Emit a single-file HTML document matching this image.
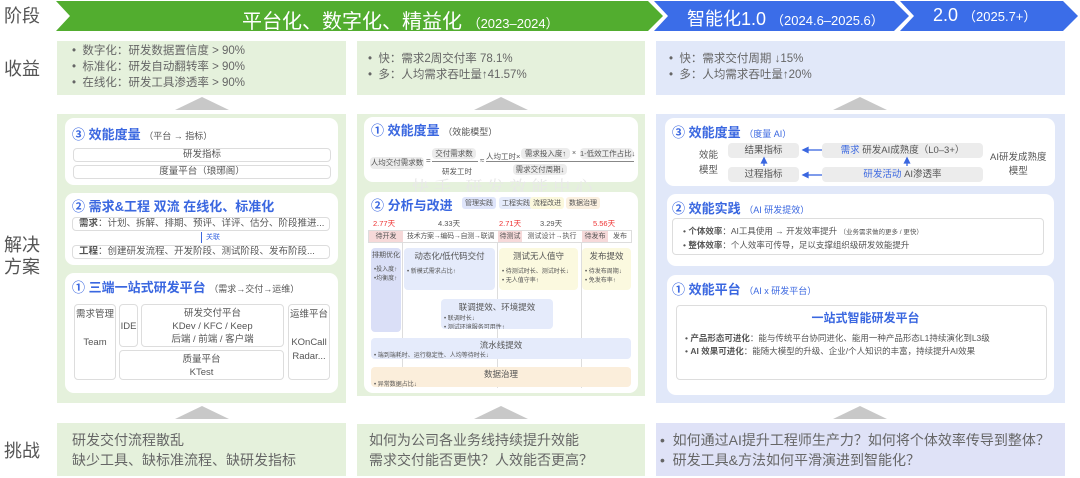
<!DOCTYPE html><html><head><meta charset="utf-8"><style>
*{margin:0;padding:0;box-sizing:border-box}
body{width:1080px;height:478px;background:#fff;position:relative;overflow:hidden;font-family:"Liberation Sans","Noto Sans CJK SC",sans-serif;color:#555}
.a{position:absolute}
.lbl{position:absolute;left:4px;font-size:18px;color:#555;line-height:22px}
.g{background:#e5f1dc}.b{background:#e1e8f9}.bc{background:#dfe2f7}
.card{position:absolute;background:#fff;border-radius:9px}
.t{color:#3a67e0;font-size:13px;font-weight:bold;white-space:nowrap}
.t small{font-size:9px;font-weight:normal;color:#555}
.t2 small{color:#3a67e0}
.row{position:absolute;border:1px solid #ddd;border-radius:4px;font-size:9.5px;text-align:center;color:#555;background:#fff;white-space:nowrap;overflow:hidden}
.ul{font-size:11.5px;line-height:16px;color:#666}
.tri{position:absolute;width:0;height:0;border-left:27px solid transparent;border-right:27px solid transparent;border-bottom:13px solid #c8c8c8}
.pill{position:absolute;background:#ececec;border-radius:4px;font-size:9px;text-align:center;color:#555;white-space:nowrap}
.ph{position:absolute;border-radius:4px;font-size:8px;color:#555;white-space:nowrap;overflow:hidden}
.ph b{display:block;text-align:center;font-weight:normal;font-size:8.5px;margin:2px 0}
.sm{font-size:6px;padding-left:3px;line-height:9px}
</style></head><body>
<svg class="a" style="left:0;top:0" width="1080" height="34">
<polygon points="56,1 648,1 663,16 648,31 56,31 70,16" fill="#52ad2f"/>
<polygon points="654,1 894,1 909,16 894,31 654,31 668,16" fill="#3b6de8"/>
<polygon points="900,1 1063,1 1078,16 1063,31 900,31 914,16" fill="#3b6de8"/>
</svg>
<div class="lbl" style="top:5px">阶段</div>
<div class="a" style="left:242px;top:5px;color:#fff;font-size:20px;white-space:nowrap">平台化、数字化、精益化 <span style="font-size:13px">（2023–2024）</span></div>
<div class="a" style="left:687px;top:5px;color:#fff;font-size:18px;white-space:nowrap">智能化1.0 <span style="font-size:13px">（2024.6–2025.6）</span></div>
<div class="a" style="left:933px;top:5px;color:#fff;font-size:18px;white-space:nowrap">2.0 <span style="font-size:13px">（2025.7+）</span></div>

<div class="lbl" style="top:58px">收益</div>
<div class="lbl" style="top:234px">解决<br>方案</div>
<div class="lbl" style="top:440px">挑战</div>

<div class="a g" style="left:57px;top:41px;width:289px;height:54px"></div>
<div class="a g" style="left:357px;top:41px;width:288px;height:54px"></div>
<div class="a b" style="left:656px;top:41px;width:409px;height:54px"></div>
<div class="a ul" style="left:72px;top:43px">•&nbsp; 数字化：研发数据置信度 &gt; 90%<br>•&nbsp; 标准化：研发自动翻转率 &gt; 90%<br>•&nbsp; 在线化：研发工具渗透率 &gt; 90%</div>
<div class="a ul" style="left:368px;top:51px">•&nbsp; 快：需求2周交付率 78.1%<br>•&nbsp; 多：人均需求吞吐量↑41.57%</div>
<div class="a ul" style="left:669px;top:51px">•&nbsp; 快：需求交付周期 ↓15%<br>•&nbsp; 多：人均需求吞吐量↑20%</div>
<div class="tri" style="left:175px;top:97px"></div><div class="tri" style="left:474px;top:97px"></div><div class="tri" style="left:833px;top:97px"></div>

<div class="a g" style="left:57px;top:114px;width:289px;height:289px"></div>
<div class="a g" style="left:357px;top:114px;width:288px;height:282px"></div>
<div class="a b" style="left:656px;top:114px;width:409px;height:289px"></div>

<div class="card" style="left:65px;top:118px;width:273px;height:67px"></div>
<div class="a t" style="left:72px;top:124px">③ 效能度量 <small>（平台 → 指标）</small></div>
<div class="row" style="left:73px;top:148px;width:258px;height:14px;line-height:12px">研发指标</div>
<div class="row" style="left:73px;top:165px;width:258px;height:14px;line-height:12px">度量平台（琅琊阁）</div>

<div class="card" style="left:65px;top:193px;width:273px;height:72px"></div>
<div class="a t" style="left:72px;top:196px">② 需求&amp;工程 双流 在线化、标准化</div>
<div class="row" style="left:72px;top:217px;width:258px;height:14px;line-height:12px;text-align:left;padding-left:6px"><b>需求</b>：计划、拆解、排期、预评、详评、估分、阶段推进...</div>
<div class="a" style="left:201px;top:232px;width:1px;height:11px;background:#3a67e0"></div>
<div class="a" style="left:206px;top:232px;font-size:7px;color:#3a67e0">关联</div>
<div class="row" style="left:72px;top:245px;width:258px;height:14px;line-height:12px;text-align:left;padding-left:6px"><b>工程</b>：创建研发流程、开发阶段、测试阶段、发布阶段...</div>

<div class="card" style="left:65px;top:273px;width:273px;height:120px"></div>
<div class="a t" style="left:72px;top:277px">① 三端一站式研发平台 <small>（需求→交付→运维）</small></div>
<div class="row" style="left:74px;top:304px;width:42px;height:76px;line-height:14px;padding-top:3px">需求管理<br><br>Team</div>
<div class="row" style="left:119px;top:304px;width:19px;height:43px;line-height:43px">IDE</div>
<div class="row" style="left:141px;top:304px;width:143px;height:43px;line-height:13px;padding-top:2px">研发交付平台<br>KDev / KFC / Keep<br>后端 / 前端 / 客户端</div>
<div class="row" style="left:119px;top:350px;width:165px;height:30px;line-height:13px;padding-top:2px">质量平台<br>KTest</div>
<div class="row" style="left:288px;top:304px;width:42px;height:76px;line-height:14px;padding-top:3px">运维平台<br><br>KOnCall<br>Radar...</div>

<div class="card" style="left:364px;top:117px;width:274px;height:65px"></div>
<div class="a t" style="left:371px;top:120px">① 效能度量 <small>（效能模型）</small></div>
<div class="pill" style="left:370px;top:157px;width:54px;height:12px;line-height:12px;font-size:7.5px">人均交付需求数</div>
<div class="a" style="left:426px;top:156px;font-size:8px">=</div>
<div class="pill" style="left:432px;top:148px;width:44px;height:11px;line-height:11px;font-size:7.5px">交付需求数</div>
<div class="a" style="left:432px;top:161px;width:46px;height:1px;background:#888"></div>
<div class="a" style="left:442px;top:166px;font-size:7.5px">研发工时</div>
<div class="a" style="left:480px;top:156px;font-size:8px">≈</div>
<div class="a" style="left:486px;top:151px;font-size:7.5px">人均工时×</div>
<div class="pill" style="left:521px;top:148px;width:49px;height:11px;line-height:11px;font-size:7.5px">需求投入度↑</div>
<div class="a" style="left:572px;top:150px;font-size:7px">×</div>
<div class="pill" style="left:580px;top:148px;width:53px;height:11px;line-height:11px;font-size:7.5px">1-低效工作占比↓</div>
<div class="a" style="left:486px;top:161px;width:148px;height:1px;background:#888"></div>
<div class="pill" style="left:513px;top:164px;width:54px;height:11px;line-height:11px;font-size:7.5px">需求交付周期↓</div>
<div class="a" style="left:412px;top:176px;font-family:'Noto Serif CJK SC',serif;font-size:17px;line-height:20px;color:#e8e8e8;letter-spacing:5px;white-space:nowrap">快手 研发效能中心</div>

<div class="card" style="left:364px;top:192px;width:274px;height:201px"></div>
<div class="a t" style="left:371px;top:195px">② 分析与改进</div>
<div class="a" style="left:462px;top:197px;font-size:7px;background:#dfe5fb;border-radius:3px;padding:1px 3px">管理实践</div>
<div class="a" style="left:499px;top:197px;font-size:7px;background:#e5ebfb;border-radius:3px;padding:1px 3px">工程实践</div>
<div class="a" style="left:530px;top:197px;font-size:7px;background:#fbf8dc;border-radius:3px;padding:1px 3px">流程改进</div>
<div class="a" style="left:566px;top:197px;font-size:7px;background:#fbf0e0;border-radius:3px;padding:1px 3px">数据治理</div>
<div class="a" style="left:373px;top:218px;font-size:7.5px;color:#e33">2.77天</div>
<div class="a" style="left:438px;top:218px;font-size:7.5px">4.33天</div>
<div class="a" style="left:499px;top:218px;font-size:7.5px;color:#e33">2.71天</div>
<div class="a" style="left:540px;top:218px;font-size:7.5px">3.29天</div>
<div class="a" style="left:593px;top:218px;font-size:7.5px;color:#e33">5.56天</div>
<div class="a" style="left:368px;top:230px;width:264px;height:13px;border:1px solid #ddd;font-size:7px;line-height:11px;white-space:nowrap">
<span class="a" style="left:0;width:34px;background:#f6d9d9;text-align:center">待开发</span>
<span class="a" style="left:34px;width:95px;text-align:center;letter-spacing:-0.3px">技术方案→编码→自测→联调</span>
<span class="a" style="left:129px;width:24px;background:#f6d9d9;text-align:center">待测试</span>
<span class="a" style="left:153px;width:60px;text-align:center">测试设计→执行</span>
<span class="a" style="left:213px;width:26px;background:#f6d9d9;text-align:center">待发布</span>
<span class="a" style="left:239px;width:24px;text-align:center">发布</span></div>
<div class="a" style="left:402px;top:243px;width:1px;height:145px;background:#ddd"></div>
<div class="a" style="left:497px;top:243px;width:1px;height:145px;background:#ddd"></div>
<div class="a" style="left:581px;top:243px;width:1px;height:145px;background:#ddd"></div>
<div class="ph" style="left:371px;top:248px;width:30px;height:84px;background:#dadff7"><b style="font-size:7px">排期优化</b><div class="sm" style="margin-top:6px">•投入度↑<br>•均衡度↑</div></div>
<div class="ph" style="left:404px;top:248px;width:91px;height:42px;background:#e5ebfb"><b>动态化/低代码交付</b><div class="sm" style="margin-top:6px">• 新模式需求占比↑</div></div>
<div class="ph" style="left:499px;top:248px;width:79px;height:42px;background:#fbf9df"><b>测试无人值守</b><div class="sm" style="margin-top:6px">• 待测试时长、测试时长↓<br>• 无人值守率↑</div></div>
<div class="ph" style="left:582px;top:248px;width:49px;height:42px;background:#fbf9df"><b>发布提效</b><div class="sm" style="margin-top:6px">• 待发布周期↓<br>• 免发布率↑</div></div>
<div class="ph" style="left:441px;top:299px;width:112px;height:30px;background:#e5ebfb"><b>联调提效、环境提效</b><div class="sm">• 联调时长↓<br>• 测试环境服务可用性↑</div></div>
<div class="ph" style="left:371px;top:338px;width:260px;height:21px;background:#e5ebfb"><b style="margin:1px 0">流水线提效</b><div class="sm">• 端到端耗时、运行稳定性、人均等待时长↓</div></div>
<div class="ph" style="left:371px;top:367px;width:260px;height:20px;background:#fbeedb"><b style="margin:1px 0">数据治理</b><div class="sm">• 异常数据占比↓</div></div>

<div class="card" style="left:665px;top:118px;width:390px;height:68px"></div>
<div class="a t t2" style="left:672px;top:122px">③ 效能度量 <small>（度量 AI）</small></div>
<div class="a" style="left:699px;top:148px;font-size:9.5px;line-height:15px;text-align:center">效能<br>模型</div>
<div class="pill" style="left:728px;top:143px;width:71px;height:15px;line-height:15px;font-size:9.5px">结果指标</div>
<div class="pill" style="left:728px;top:167px;width:71px;height:15px;line-height:15px;font-size:9.5px">过程指标</div>
<div class="pill" style="left:822px;top:143px;width:161px;height:15px;line-height:15px;font-size:9.5px"><span style="color:#3a67e0">需求</span> 研发AI成熟度（L0–3+）</div>
<div class="pill" style="left:822px;top:167px;width:161px;height:15px;line-height:15px;font-size:9.5px"><span style="color:#3a67e0">研发活动</span> AI渗透率</div>
<div class="a" style="left:990px;top:151px;font-size:9.5px;line-height:14px;text-align:center">AI研发成熟度<br>模型</div>
<svg class="a" style="left:660px;top:140px" width="340" height="50">
<g stroke="#3a67e0" stroke-width="1.3" fill="#3a67e0">
<line x1="146" y1="10" x2="162" y2="10"/><polygon points="143,10 148,7.5 148,12.5"/>
<line x1="146" y1="35" x2="162" y2="35"/><polygon points="143,35 148,32.5 148,37.5"/>
<line x1="104" y1="26" x2="104" y2="21"/><polygon points="104,18 101.5,23 106.5,23"/>
<line x1="247" y1="26" x2="247" y2="21"/><polygon points="247,18 244.5,23 249.5,23"/>
</g></svg>

<div class="card" style="left:667px;top:194px;width:387px;height:72px"></div>
<div class="a t t2" style="left:672px;top:198px">② 效能实践 <small>（AI 研发提效）</small></div>
<div class="row" style="left:672px;top:218px;width:372px;height:37px;text-align:left;padding:6px 0 0 10px;line-height:13px;font-size:8.5px">• <b>个体效率</b>：AI工具使用 → 开发效率提升 <span style="font-size:6.5px">（业务需求做的更多 / 更快）</span><br>• <b>整体效率</b>：个人效率可传导，足以支撑组织级研发效能提升</div>

<div class="card" style="left:667px;top:275px;width:387px;height:120px"></div>
<div class="a t t2" style="left:672px;top:279px">① 效能平台 <small>（AI x 研发平台）</small></div>
<div class="row" style="left:676px;top:305px;width:371px;height:75px;text-align:left;padding:6px 0 0 8px;font-size:8.5px;line-height:13px">
<div style="text-align:center;color:#3a67e0;font-size:12px;font-weight:bold;margin-bottom:7px">一站式智能研发平台</div>
• <b>产品形态可进化</b>：能与传统平台协同进化、能用一种产品形态L1持续演化到L3级<br>• <b>AI 效果可进化</b>：能随大模型的升级、企业/个人知识的丰富，持续提升AI效果</div>

<div class="tri" style="left:175px;top:406px"></div><div class="tri" style="left:474px;top:406px"></div><div class="tri" style="left:833px;top:406px"></div>

<div class="a g" style="left:57px;top:423px;width:289px;height:53px"></div>
<div class="a g" style="left:357px;top:424px;width:288px;height:52px"></div>
<div class="a bc" style="left:656px;top:423px;width:409px;height:53px"></div>
<div class="a" style="left:72px;top:430px;font-size:14px;line-height:20px;color:#666">研发交付流程散乱<br>缺少工具、缺标准流程、缺研发指标</div>
<div class="a" style="left:369px;top:430px;font-size:14px;line-height:20px;color:#666">如何为公司各业务线持续提升效能<br>需求交付能否更快？人效能否更高？</div>
<div class="a" style="left:660px;top:430px;font-size:14px;line-height:20px;color:#666">•&nbsp; 如何通过AI提升工程师生产力？如何将个体效率传导到整体？<br>•&nbsp; 研发工具&amp;方法如何平滑演进到智能化？</div>
</body></html>
